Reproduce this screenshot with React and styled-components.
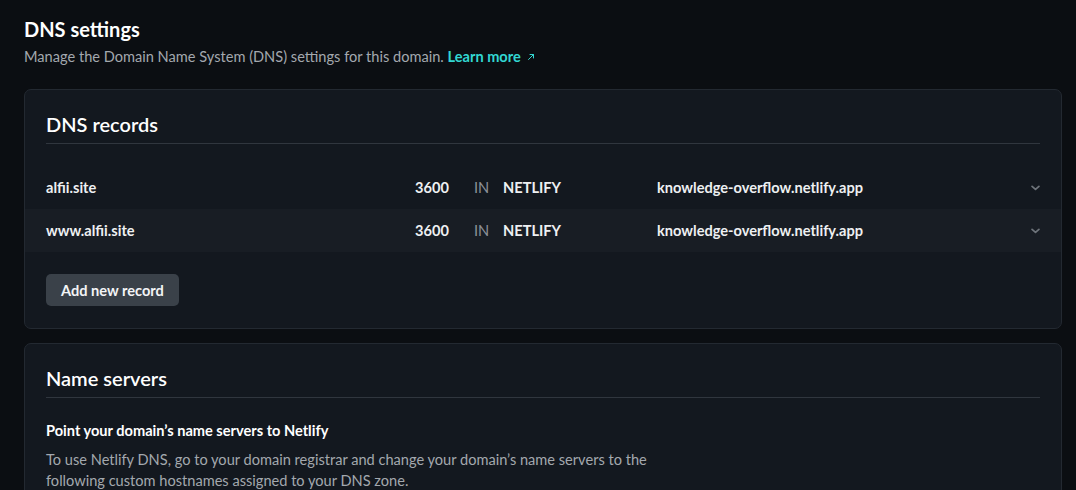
import React from "react"
import styled, { createGlobalStyle } from "styled-components"

const GlobalStyle = createGlobalStyle`
  html, body {
    margin: 0;
    padding: 0;
    background: #0b0e12;
  }
  body {
    font-family: Lato, "Noto Sans", "Liberation Sans", sans-serif;
    color: #e8eaed;
    -webkit-font-smoothing: antialiased;
  }
`

const records = [
  { name: "alfii.site", ttl: "3600", cls: "IN", type: "NETLIFY", value: "knowledge-overflow.netlify.app" },
  { name: "www.alfii.site", ttl: "3600", cls: "IN", type: "NETLIFY", value: "knowledge-overflow.netlify.app" },
]

export default function App() {
  return (
    <Page>
      <GlobalStyle />
      <Title>DNS settings</Title>
      <Lead>
        Manage the Domain Name System (DNS) settings for this domain.{" "}
        <LearnMore href="#">
          Learn more
          <ExternalIcon viewBox="0 0 8 8">
            <path d="M1.5 6.5 L6.5 1.5 M3 1.5 H6.5 V5" fill="none" stroke="currentColor" strokeWidth="1" strokeLinecap="round" />
          </ExternalIcon>
        </LearnMore>
      </Lead>

      <Card>
        <CardHeader>DNS records</CardHeader>
        <Records>
          {records.map((r, i) => (
            <Row key={r.name} striped={i % 2 === 1}>
              <NameCell>{r.name}</NameCell>
              <TtlCell>{r.ttl}</TtlCell>
              <ClassCell>{r.cls}</ClassCell>
              <TypeCell>{r.type}</TypeCell>
              <ValueCell>{r.value}</ValueCell>
              <Chevron viewBox="0 0 10 6">
                <path d="M1.2 1.2 L5 4.6 L8.8 1.2" fill="none" stroke="currentColor" strokeWidth="1.9" strokeLinecap="round" strokeLinejoin="round" />
              </Chevron>
            </Row>
          ))}
        </Records>
        <Actions>
          <Button>Add new record</Button>
        </Actions>
      </Card>

      <Card>
        <CardHeader>Name servers</CardHeader>
        <Body>
          <SubTitle>Point your domain’s name servers to Netlify</SubTitle>
          <Paragraph>
            To use Netlify DNS, go to your domain registrar and change your domain’s name servers to the
            following custom hostnames assigned to your DNS zone.
          </Paragraph>
        </Body>
      </Card>
    </Page>
  )
}

const Page = styled.div`
  display: flex;
  flex-direction: column;
  gap: 14px;
  padding: 16px 14px 0 24px;
  height: 490px;
  box-sizing: border-box;
  overflow: hidden;
`

const Title = styled.h1`
  margin: 0;
  font-size: 20px;
  font-weight: 700;
  line-height: 26px;
  color: #ffffff;
`

const Lead = styled.p`
  margin: -9px 0 8px;
  font-size: 14.6px;
  line-height: 20px;
  color: #a3a8ae;
`

const LearnMore = styled.a`
  color: #32d7d2;
  font-weight: 700;
  text-decoration: none;
`

const ExternalIcon = styled.svg`
  width: 8px;
  height: 8px;
  margin-left: 6px;
  vertical-align: 1px;
`

const Card = styled.section`
  background: #13181f;
  border: 1px solid #232931;
  border-radius: 7px;
  padding: 0 0 22px;
`

const CardHeader = styled.h2`
  margin: 0 21px;
  padding: 22px 0 7px;
  font-size: 20px;
  font-weight: 600;
  line-height: 24px;
  color: #ffffff;
  border-bottom: 1px solid #30363e;
`

const Records = styled.div`
  margin-top: 22px;
  display: flex;
  flex-direction: column;
`

const Row = styled.div`
  display: grid;
  grid-template-columns: 369px 59px 29px 154px 1fr 14px;
  align-items: center;
  height: 43px;
  padding: 0 21px;
  background: ${p => (p.striped ? "#181d24" : "transparent")};
  font-size: 14.6px;
  font-weight: 700;
  color: #eef0f2;
`

const NameCell = styled.span``

const TtlCell = styled.span``

const ClassCell = styled.span`
  font-weight: 400;
  color: #8c9198;
`

const TypeCell = styled.span``

const ValueCell = styled.span``

const Chevron = styled.svg`
  width: 9px;
  height: 6px;
  color: #6e747b;
  justify-self: end;
`

const Actions = styled.div`
  margin-top: 22px;
  padding: 0 21px;
`

const Button = styled.button`
  height: 32px;
  padding: 0 15px;
  border: 0;
  border-radius: 5px;
  background: #3a4149;
  color: #f3f4f6;
  font-family: inherit;
  font-size: 14.6px;
  font-weight: 700;
`

const Body = styled.div`
  padding: 23px 21px 0;
`

const SubTitle = styled.h3`
  margin: 0;
  font-size: 14.6px;
  font-weight: 700;
  line-height: 20px;
  color: #ffffff;
`

const Paragraph = styled.p`
  margin: 8px 0 0;
  max-width: 640px;
  font-size: 14.6px;
  line-height: 21px;
  color: #a3a8ae;
`
